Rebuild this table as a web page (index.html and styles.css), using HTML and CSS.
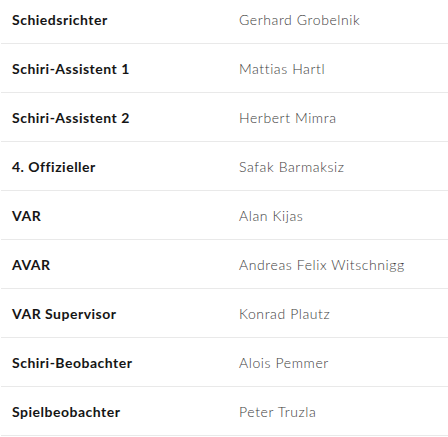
FILE: index.html
```html
<!DOCTYPE html>
<html lang="de">
<head>
<meta charset="utf-8">
<link rel="stylesheet" href="styles.css">
</head>
<body>
<div class="officials">
  <div class="row"><div class="role">Schiedsrichter</div><div class="name">Gerhard Grobelnik</div></div>
  <div class="row"><div class="role">Schiri-Assistent 1</div><div class="name">Mattias Hartl</div></div>
  <div class="row"><div class="role">Schiri-Assistent 2</div><div class="name">Herbert Mimra</div></div>
  <div class="row"><div class="role">4. Offizieller</div><div class="name">Safak Barmaksiz</div></div>
  <div class="row"><div class="role">VAR</div><div class="name">Alan Kijas</div></div>
  <div class="row"><div class="role">AVAR</div><div class="name">Andreas Felix Witschnigg</div></div>
  <div class="row"><div class="role">VAR Supervisor</div><div class="name">Konrad Plautz</div></div>
  <div class="row"><div class="role">Schiri-Beobachter</div><div class="name">Alois Pemmer</div></div>
  <div class="row"><div class="role">Spielbeobachter</div><div class="name">Peter Truzla</div></div>
</div>
</body>
</html>
```

FILE: styles.css
```css
html, body {
  margin: 0;
  padding: 0;
  background: #ffffff;
  overflow: hidden;
}

.officials {
  margin-top: -5px;
  margin-left: 1px;
  font-family: Lato, "Open Sans", sans-serif;
  font-variant-ligatures: none;
}

.row {
  display: grid;
  grid-template-columns: 238px 1fr;
  align-items: center;
  height: 48px;
  border-bottom: 1px solid #e9e9e9;
}

.role {
  padding-left: 11px;
  font-size: 14px;
  font-weight: 700;
  letter-spacing: 0.5px;
  color: #151515;
}

.name {
  font-size: 14px;
  font-weight: 300;
  letter-spacing: 0.6px;
  color: #3c3c3c;
}
```
